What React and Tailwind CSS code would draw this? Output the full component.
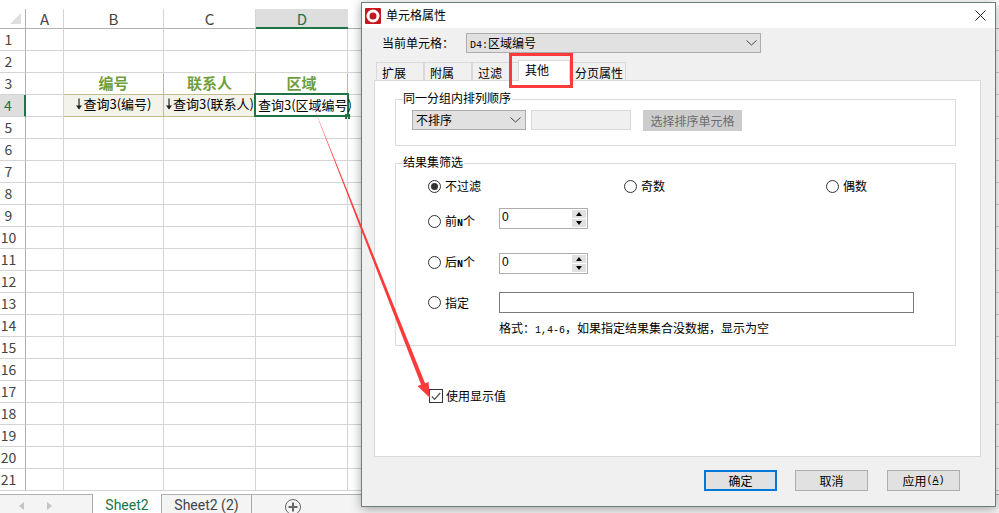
const rowNums = Array.from({ length: 21 }, (_, i) => i + 1);
const sans = { fontFamily: '"Noto Sans CJK SC", sans-serif' };

function Radio({ checked }) {
  return (
    <span className="flex h-[13px] w-[13px] shrink-0 items-center justify-center rounded-full border border-[#333] bg-white">
      {checked && <span className="h-[7px] w-[7px] rounded-full bg-[#333]" />}
    </span>
  );
}

function Spin() {
  return (
    <div className="flex h-[21px] w-[89px] items-center justify-between border border-[#adadad] bg-white pr-px pl-0.5">
      <span className="mb-1 font-['Liberation_Sans'] text-[12px] leading-none text-black">0</span>
      <div className="flex h-[17px] w-[14px] flex-col gap-px">
        <span className="flex h-2 items-center justify-center bg-[#e1e1e1]">
          <span className="h-0 w-0 border-x-[3px] border-b-[4px] border-x-transparent border-b-black" />
        </span>
        <span className="flex h-2 items-center justify-center bg-[#e1e1e1]">
          <span className="h-0 w-0 border-x-[3px] border-t-[4px] border-x-transparent border-t-black" />
        </span>
      </div>
    </div>
  );
}

function Chevron() {
  return (
    <svg width="11" height="6" viewBox="0 0 11 6">
      <path d="M0.5 0.5 L5.5 5 L10.5 0.5" fill="none" stroke="#444" strokeWidth="1" />
    </svg>
  );
}

function Tab({ label, className }) {
  return (
    <div className={"flex h-[18px] items-center justify-start border border-b-0 border-[#d9d9d9] bg-[#f0f0f0] pt-[2px] pl-[5px] text-[12px] leading-none text-black " + className}>
      {label}
    </div>
  );
}

function Btn({ children, primary, className }) {
  return (
    <div
      className={
        "flex h-[21px] w-[73px] items-center justify-center bg-[#e1e1e1] text-[12px] text-black " +
        (primary ? "border-2 border-[#0078d7] " : "border border-[#adadad] ") +
        (className || "")
      }
    >
      {children}
    </div>
  );
}

function Arrow() {
  return (
    <svg width="8" height="12" viewBox="0 0 8 12" className="shrink-0">
      <path d="M4 0.5 V10.5" stroke="#222" strokeWidth="1.2" fill="none" />
      <path d="M1 7.5 L4 11.5 L7 7.5 Z" fill="#222" />
    </svg>
  );
}

function Sheet() {
  return (
    <div className="flex h-[513px] w-[999px] flex-col overflow-hidden bg-white" style={sans}>
      <div className="h-[9px] shrink-0 bg-white" />
      <div className="grid shrink-0 grid-cols-[26px_38px_100px_92px_92px_1fr] grid-rows-[20px_repeat(21,22px)] text-[#444]">
        <div className="relative border-r border-b border-[#b1b1b1] bg-white">
          <span className="absolute right-1 bottom-1 h-0 w-0 border-b-[11px] border-l-[11px] border-b-[#dfdfdf] border-l-transparent" />
        </div>
        {["A", "B", "C"].map((c) => (
          <div key={c} className="flex items-center justify-center border-r border-b border-[#b1b1b1] border-r-[#d4d4d4] text-[15px] leading-none">
            {c}
          </div>
        ))}
        <div className="flex items-center justify-center border-b-2 border-[#217346] bg-[#dedede] text-[15px] leading-none text-[#217346]">D</div>
        <div className="border-b border-[#b1b1b1]" />
        {rowNums.map((n) => {
          const isHead = n === 3;
          const isData = n === 4;
          const line = isHead || isData ? "border-[#bdbd8e]" : "border-[#d4d4d4]";
          return [
            <div
              key={"r" + n}
              className={
                "flex items-center justify-center border-b border-[#d4d4d4] pr-2 pb-[2px] text-[14px] leading-none " +
                (isData ? "border-r-2 border-r-[#217346] bg-[#dedede] text-[#217346]" : "border-r border-r-[#b1b1b1]")
              }
            >
              {n}
            </div>,
            <div key={"a" + n} className="border-r border-b border-[#d4d4d4]" />,
            <div key={"b" + n} className={"flex items-center justify-center border-r border-b whitespace-nowrap " + line + (isData ? " bg-[#f3f3e9]" : "")}>
              {isHead && <span className="text-[15px] font-bold text-[#6f9e3a]">编号</span>}
              {isData && <span className="mb-1 flex items-center text-[13px] leading-none text-black"><Arrow />查询3(编号)</span>}
            </div>,
            <div key={"c" + n} className={"flex items-center justify-center border-r border-b whitespace-nowrap " + line + (isData ? " bg-[#f3f3e9]" : "")}>
              {isHead && <span className="text-[15px] font-bold text-[#6f9e3a]">联系人</span>}
              {isData && <span className="mb-1 flex items-center text-[13px] leading-none text-black"><Arrow />查询3(联系人)</span>}
            </div>,
            <div key={"d" + n} className={"relative flex items-center justify-center border-r border-b whitespace-nowrap " + line}>
              {isHead && <span className="text-[15px] font-bold text-[#6f9e3a]">区域</span>}
              {isData && (
                <>
                  <span className="absolute -top-[2px] -left-[2px] h-[24px] w-[95px] border-2 border-[#217346]" />
                  <span className="absolute -right-[3px] -bottom-[3px] h-[5px] w-[5px] bg-[#217346]" />
                  <span className="absolute top-[3px] left-[2px] text-[13px] leading-none text-black">查询3(区域编号)</span>
                </>
              )}
            </div>,
            <div key={"e" + n} className="border-b border-[#d4d4d4]" />,
          ];
        })}
      </div>
      <div className="h-[3px] shrink-0" />
      <div className="flex min-h-0 flex-1 border-t border-[#b1b1b1] bg-[#f4f4f4] font-['Roboto'] text-[14px] leading-none">
        <div className="flex w-[92px] items-center gap-[23px] pt-[4px] pl-[19px]">
          <span className="h-0 w-0 border-y-[4px] border-r-[5px] border-y-transparent border-r-[#c4c4c4]" />
          <span className="h-0 w-0 border-y-[4px] border-l-[5px] border-y-transparent border-l-[#c4c4c4]" />
        </div>
        <div className="-mt-px flex w-[70px] items-center justify-center border-x border-[#a9a9a9] bg-white pt-[2px] text-[#217346]">Sheet2</div>
        <div className="flex w-[90px] items-center justify-center border-r border-[#a9a9a9] pt-[1px] text-[#444]">Sheet2 (2)</div>
        <div className="ml-[33px] flex items-center pt-[5px]">
          <svg width="16" height="16" viewBox="0 0 16 16">
            <circle cx="8" cy="8" r="7.5" fill="none" stroke="#666" strokeWidth="1" />
            <path d="M8 3.5 V12.5 M3.5 8 H12.5" stroke="#666" strokeWidth="2" />
          </svg>
        </div>
      </div>
    </div>
  );
}

function Dialog() {
  return (
    <div
      className="absolute top-[2px] left-[361px] flex h-[505px] w-[635px] flex-col border border-[#6e7f73] bg-[#f0f0f0] shadow-[0_2px_10px_rgba(0,0,0,0.35)]"
      style={sans}
    >
      <div className="flex h-[25px] shrink-0 items-center bg-white pl-[3px] text-[12px] text-black">
        <svg width="16" height="16" viewBox="0 0 16 16" className="mr-[5px]">
          <rect width="16" height="16" rx="1" fill="#c4161c" />
          <circle cx="8" cy="8" r="5" fill="none" stroke="#fff" strokeWidth="3" />
        </svg>
        <span className="-mt-px">单元格属性</span>
        <svg width="11" height="11" viewBox="0 0 11 11" className="mr-[9px] ml-auto">
          <path d="M0.5 0.5 L10.5 10.5 M10.5 0.5 L0.5 10.5" stroke="#222" strokeWidth="1" />
        </svg>
      </div>
      <div className="flex min-h-0 flex-1 flex-col pt-[5px] pr-[14px] pb-[15px] pl-3 text-[12px] text-black">
        <div className="flex h-[20px] items-center pl-[8px]">
          <span className="w-[84px]">当前单元格：</span>
          <div className="flex h-[20px] w-[295px] items-center justify-between border border-[#adadad] bg-[#e1e1e1] pr-[3px] pl-[3px]">
            <span>
              <span className="font-['Liberation_Mono'] text-[10px]">D4:</span>区域编号
            </span>
            <Chevron />
          </div>
        </div>
        <div className="mt-[8px] flex h-[19px] items-end pl-[2px]">
          <Tab label="扩展" className="w-[48px]" />
          <Tab label="附属" className="w-[48px]" />
          <Tab label="过滤" className="w-[46px] border-r-0" />
          <div className="relative z-10 -mb-px flex h-[21px] w-[52px] items-start justify-center border-x border-t border-[#d9d9d9] bg-white pt-[3px] pr-[14px] leading-none">其他</div>
          <Tab label="分页属性" className="w-[56px] border-l-0" />
        </div>
        <div className="flex min-h-0 flex-1 flex-col border border-[#d9d9d9] bg-white px-5 pt-[18px]">
          <div className="relative h-[47px] w-[561px] shrink-0 border border-[#dcdcdc]">
            <span className="absolute -top-[8px] left-[7px] bg-white pr-px leading-none">同一分组内排列顺序</span>
            <div className="flex items-start pt-[10px] pl-4">
              <div className="flex h-[20px] w-[114px] items-center justify-between border border-[#adadad] bg-[#e1e1e1] pr-1 pl-[3px]">
                <span>不排序</span>
                <Chevron />
              </div>
              <div className="ml-[5px] h-[20px] w-[100px] border border-[#d9d9d9] bg-[#f0f0f0]" />
              <div className="ml-[12px] flex h-[21px] w-[99px] items-center justify-center bg-[#cccccc] text-[#6d6d6d]">选择排序单元格</div>
            </div>
          </div>
          <div className="relative mt-[17px] h-[183px] w-[561px] shrink-0 border border-[#dcdcdc] pt-[15px] pl-[32px]">
            <span className="absolute -top-[8px] left-[7px] bg-white pr-px leading-none">结果集筛选</span>
            <div className="flex h-[14px] items-center">
              <div className="flex w-[196px] items-center gap-[4px]"><Radio checked /><span>不过滤</span></div>
              <div className="flex w-[202px] items-center gap-[4px]"><Radio /><span>奇数</span></div>
              <div className="flex items-center gap-[4px]"><Radio /><span>偶数</span></div>
            </div>
            <div className="mt-[15px] flex h-[21px] items-center">
              <div className="mt-[6px] flex w-[71px] items-center gap-[4px]"><Radio /><span>前<span className="font-['Liberation_Mono'] text-[10px] font-bold">N</span>个</span></div>
              <Spin />
            </div>
            <div className="mt-[24px] flex h-[21px] items-center">
              <div className="mb-[3px] flex w-[71px] items-center gap-[4px]"><Radio /><span>后<span className="font-['Liberation_Mono'] text-[10px] font-bold">N</span>个</span></div>
              <Spin />
            </div>
            <div className="mt-[18px] flex h-[21px] items-center">
              <div className="flex w-[71px] items-center gap-[4px]"><Radio /><span>指定</span></div>
              <div className="h-[21px] w-[415px] border border-[#7a7a7a] bg-white" />
            </div>
            <div className="mt-[9px] pl-[71px] leading-none">
              格式：<span className="font-['Liberation_Mono'] text-[10px]">1,4-6</span>，如果指定结果集合没数据，显示为空
            </div>
          </div>
          <div className="mt-[41px] flex items-center gap-[3px] pl-[34px]">
            <span className="flex h-[14px] w-[14px] items-center justify-center border border-[#333] bg-white">
              <svg width="10" height="9" viewBox="0 0 10 9">
                <path d="M0.8 4.5 L3.6 7.4 L9.2 1" fill="none" stroke="#555" strokeWidth="1.3" />
              </svg>
            </span>
            <span>使用显示值</span>
          </div>
        </div>
        <div className="flex shrink-0 justify-end pt-[13px] pr-[21px]">
          <Btn primary>确定</Btn>
          <Btn className="ml-[18px]">取消</Btn>
          <Btn className="ml-[19px]">
            应用<span className="font-['Liberation_Mono'] text-[10px]">(<span className="underline">A</span>)</span>
          </Btn>
        </div>
      </div>
    </div>
  );
}

export default function App() {
  return (
    <div className="relative h-[513px] w-[999px] overflow-hidden">
      <Sheet />
      <Dialog />
      <div className="absolute top-[53px] left-[509px] h-[35px] w-[64px] border-[3px] border-[#fb3b3b]" />
      <svg width="999" height="513" viewBox="0 0 999 513" className="pointer-events-none absolute top-0 left-0">
        <path d="M312 103 L425.5 384.2 L421.5 385.8 Z" fill="#fb3b3b" />
        <path d="M430 398 L417.5 386 L428.5 382 Z" fill="#fb3b3b" />
      </svg>
    </div>
  );
}
